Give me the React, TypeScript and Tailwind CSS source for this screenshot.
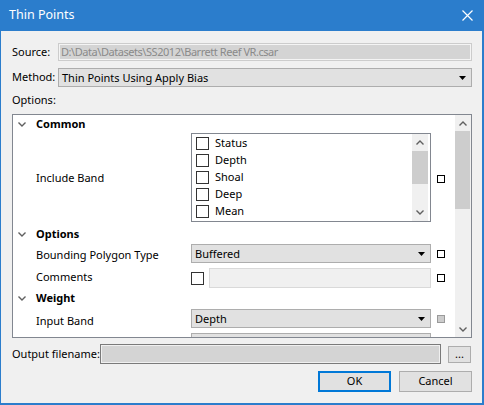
import React from "react";

const BANDS = ["Status", "Depth", "Shoal", "Deep", "Mean"];

function DownTri() {
  return (
    <svg width="7" height="4" viewBox="0 0 7 4">
      <polygon points="0,0 7,0 3.5,4" fill="#000" />
    </svg>
  );
}

function Chevron({ up, color = "#606060" }: { up?: boolean; color?: string }) {
  return (
    <svg width="8" height="5" viewBox="0 0 8 5" fill="none">
      <path
        d={up ? "M0.5 4.5L4 1L7.5 4.5" : "M0.5 0.5L4 4L7.5 0.5"}
        stroke={color}
        strokeWidth="1.4"
      />
    </svg>
  );
}

function Combo({ value, width }: { value: string; width: string }) {
  return (
    <div className={`${width} h-[19px] flex items-center justify-between border border-[#adadad] bg-[#e1e1e1] pl-[3px] pr-[5px]`}>
      <span className="leading-none">{value}</span>
      <DownTri />
    </div>
  );
}

function ResetBox({ disabled }: { disabled?: boolean }) {
  return disabled ? (
    <span className="block w-[8px] h-[8px] border border-[#9a9a9a] bg-[#cccccc]" />
  ) : (
    <span className="block w-[8px] h-[8px] border border-black bg-white" />
  );
}

function Check() {
  return <span className="block w-[13px] h-[13px] border border-[#333333] bg-white shrink-0" />;
}

function Category({ label, h }: { label: string; h: string }) {
  return (
    <div className={`${h} flex items-center pl-[5px]`}>
      <span className="w-[18px] flex items-center">
        <Chevron />
      </span>
      <span className="font-bold">{label}</span>
    </div>
  );
}

function PropRow({ label, h, align = "items-center", children }: {
  label: string;
  h: string;
  align?: string;
  children?: React.ReactNode;
}) {
  return (
    <div className={`${h} flex ${align}`}>
      <div className="w-[178px] pl-[23px] self-center whitespace-nowrap">{label}</div>
      {children}
    </div>
  );
}

export default function App() {
  return (
    <div className="w-[484px] h-[405px] bg-[#2b7dcc] flex flex-col font-['Noto_Sans',sans-serif] text-[11px] text-black select-none">
      {/* Title bar */}
      <div className="h-[31px] shrink-0 flex items-center justify-between pl-[9px] pr-[11px] text-white">
        <span className="text-[12.5px]">Thin Points</span>
        <svg width="11" height="11" viewBox="0 0 11 11">
          <path d="M0.5 0.5L10.5 10.5M10.5 0.5L0.5 10.5" stroke="#fff" strokeWidth="1.2" />
        </svg>
      </div>

      {/* Body */}
      <div className="flex-1 ml-[1px] mr-[2px] mb-[2px] bg-[#f0f0f0] pl-[11px] flex flex-col">
        {/* Source */}
        <div className="mt-[12px] h-[18px] flex items-center">
          <span className="w-[46px] shrink-0 whitespace-nowrap">Source:</span>
          <div className="w-[414px] h-[18px] border border-[#cccccc] bg-[#d4d4d4] flex items-center pl-[2px] text-[#8a8a8a] tracking-[-0.45px] whitespace-nowrap shadow-[inset_0_0_0_1px_#f4f4f4]">
            D:\Data\Datasets\SS2012\Barrett Reef VR.csar
          </div>
        </div>

        {/* Method */}
        <div className="mt-[7px] h-[19px] flex items-center">
          <span className="w-[46px] shrink-0 whitespace-nowrap">Method:</span>
          <Combo value="Thin Points Using Apply Bias" width="w-[414px]" />
        </div>

        {/* Options label */}
        <div className="mt-[6px] h-[14px] flex items-center">Options:</div>

        {/* Property grid */}
        <div className="mt-[7px] w-[460px] h-[224px] border border-[#828790] bg-white flex overflow-hidden">
          <div className="w-[442px] flex flex-col overflow-hidden">
            <Category label="Common" h="h-[18px] shrink-0" />

            <PropRow label="Include Band" h="h-[91px] shrink-0" align="items-start">
              <div className="w-[240px] h-[89px] border border-[#828790] bg-white flex">
                <div className="flex-1 flex flex-col pt-[1px] pl-[4px]">
                  {BANDS.map((b) => (
                    <div key={b} className="h-[17px] flex items-center gap-[6px]">
                      <Check />
                      <span>{b}</span>
                    </div>
                  ))}
                </div>
                <div className="w-[16px] mr-[2px] bg-[#f0f0f0] flex flex-col items-center">
                  <div className="h-[17px] flex items-center justify-center">
                    <Chevron up />
                  </div>
                  <div className="w-[16px] h-[33px] bg-[#cdcdcd]" />
                  <div className="flex-1" />
                  <div className="h-[17px] flex items-center justify-center">
                    <Chevron />
                  </div>
                </div>
              </div>
              <div className="self-center ml-[6px]">
                <ResetBox />
              </div>
            </PropRow>

            <Category label="Options" h="h-[20px] shrink-0" />

            <PropRow label="Bounding Polygon Type" h="h-[22px] shrink-0" align="items-start">
              <Combo value="Buffered" width="w-[240px]" />
              <div className="ml-[6px] mt-[6px]">
                <ResetBox />
              </div>
            </PropRow>

            <PropRow label="Comments" h="h-[22px] shrink-0" align="items-start">
              <div className="w-[240px] h-[20px] mt-[2px] flex items-center">
                <Check />
                <div className="ml-[5px] flex-1 h-[20px] border border-[#d9d9d9] bg-[#f0f0f0]" />
              </div>
              <div className="ml-[6px] mt-[8px]">
                <ResetBox />
              </div>
            </PropRow>

            <Category label="Weight" h="h-[21px] shrink-0" />

            <PropRow label="Input Band" h="h-[24px] shrink-0" align="items-start">
              <Combo value="Depth" width="w-[240px]" />
              <div className="ml-[6px] mt-[6px]">
                <ResetBox disabled />
              </div>
            </PropRow>

            <PropRow label="" h="h-[20px] shrink-0" align="items-start">
              <div className="w-[240px] h-[19px] border border-[#adadad] bg-[#e1e1e1]" />
            </PropRow>
          </div>

          {/* Grid scrollbar */}
          <div className="w-[16px] bg-[#f0f0f0] flex flex-col">
            <div className="h-[16px] flex items-center justify-center">
              <Chevron up />
            </div>
            <div className="h-[78px] bg-[#cdcdcd] mr-[1px]" />
            <div className="flex-1" />
            <div className="h-[16px] flex items-center justify-center">
              <Chevron />
            </div>
          </div>
        </div>

        {/* Output filename */}
        <div className="mt-[6px] h-[20px] flex items-center">
          <span className="w-[88px] shrink-0 whitespace-nowrap">Output filename:</span>
          <div className="w-[341px] h-[20px] border border-[#7a7a7a] bg-[#d4d4d4] shadow-[inset_0_0_0_1px_#f0f0f0]" />
          <div className="ml-[7px] w-[23px] h-[17px] border border-[#adadad] bg-[#e1e1e1] flex items-center justify-center leading-none pb-[2px]">
            ...
          </div>
        </div>

        {/* Buttons */}
        <div className="mt-[7px] w-[460px] flex justify-end gap-[8px]">
          <button className="w-[73px] h-[21px] border-2 border-[#0078d7] bg-[#e1e1e1] flex items-center justify-center">
            OK
          </button>
          <button className="w-[73px] h-[21px] border border-[#adadad] bg-[#e1e1e1] flex items-center justify-center">
            Cancel
          </button>
        </div>
      </div>
    </div>
  );
}
